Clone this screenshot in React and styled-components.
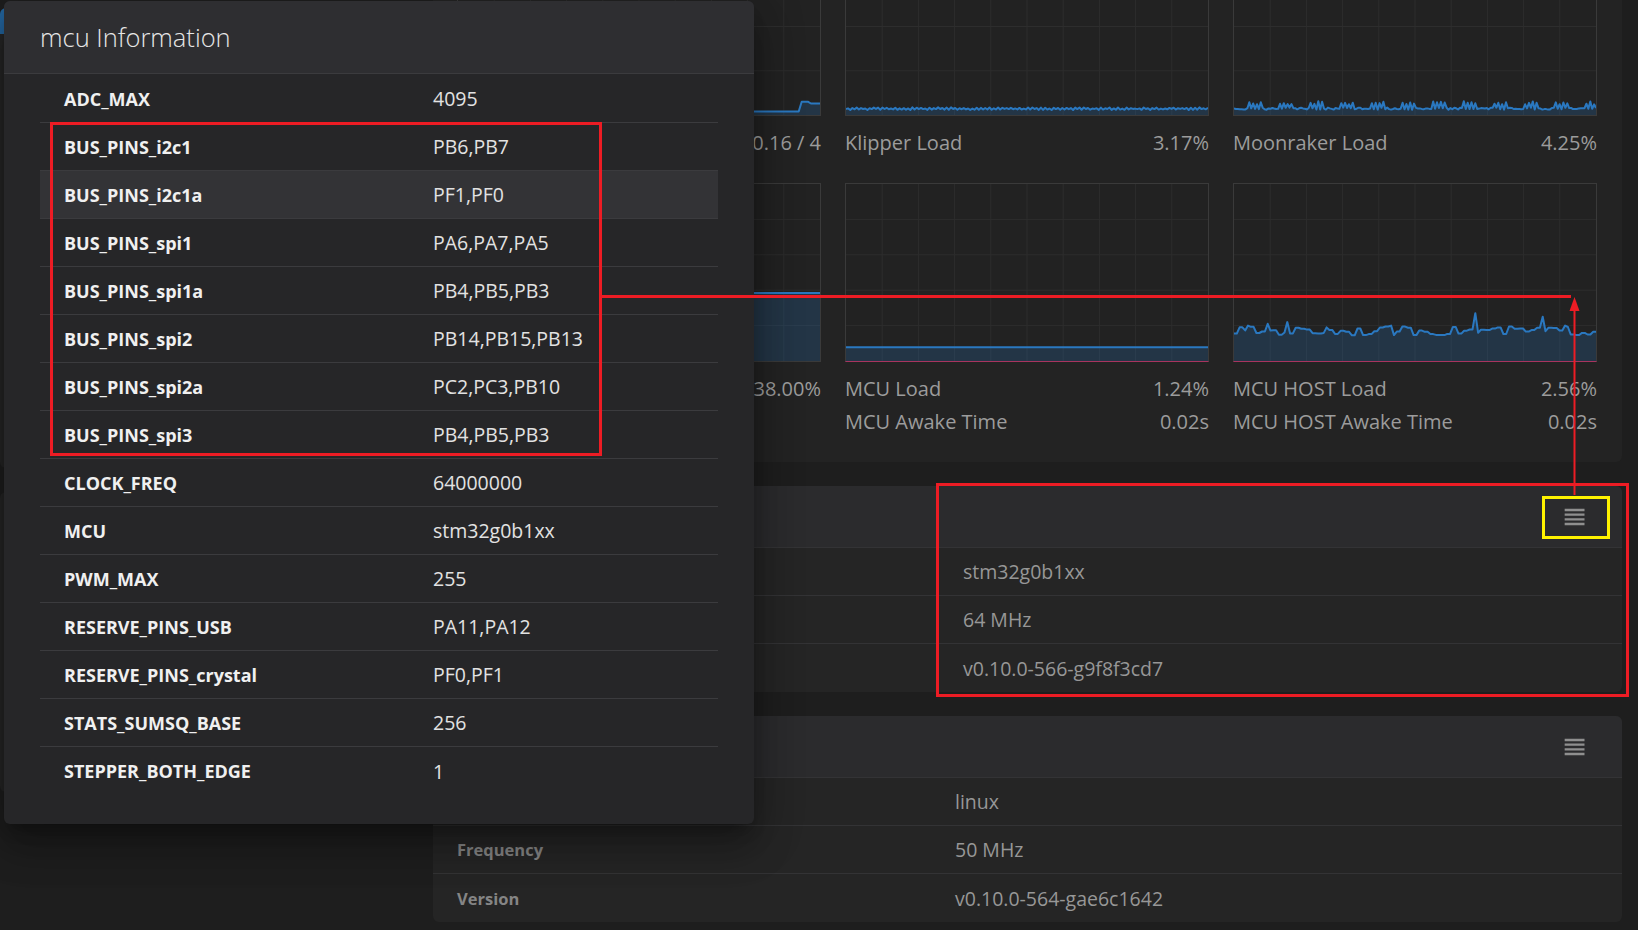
import React from "react";
import styled, { createGlobalStyle } from "styled-components";

const GlobalStyle = createGlobalStyle`
  html, body {
    margin: 0;
    padding: 0;
    background: #1e1e1e;
  }
  body {
    width: 1638px;
    height: 930px;
    overflow: hidden;
    font-family: "Open Sans", "Noto Sans", sans-serif;
  }
  * {
    box-sizing: border-box;
  }
`;

const Page = styled.div`
  position: relative;
  width: 1638px;
  height: 930px;
  overflow: hidden;
  display: grid;
  grid-template-columns: 409px 1189px;
  column-gap: 24px;
  align-items: start;
  background: #1e1e1e;
`;

const LeftColumn = styled.div`
  display: flex;
  flex-direction: column;
  gap: 24px;
  padding-top: 8px;
`;

const SideCard = styled.div`
  background: #262626;
  border-radius: 6px;
  height: ${(p) => p.$h}px;
  border-top: ${(p) => (p.$accent ? "26px solid #2466a0" : "none")};
`;

const RightColumn = styled.div`
  display: flex;
  flex-direction: column;
  gap: 24px;
  margin-top: -87px;
`;

const LoadCard = styled.div`
  background: #232323;
  border-radius: 6px;
  padding: 24px;
  display: grid;
  grid-template-columns: repeat(3, 364px);
  column-gap: 24px;
  row-gap: 24px;
`;

const ChartCell = styled.div`
  display: flex;
  flex-direction: column;
`;

const ChartBox = styled.div`
  height: 179px;
  border: 1px solid #3a3a3a;
  border-bottom-color: ${(p) => (p.$pink ? "#a8345e" : "#3a3a3a")};
  background: #222;
  svg {
    display: block;
    width: 100%;
    height: 100%;
  }
`;

const Stats = styled.div`
  margin-top: 10px;
  display: flex;
  flex-direction: column;
`;

const StatRow = styled.div`
  display: flex;
  justify-content: space-between;
  height: 33px;
  line-height: 33px;
  font-size: 20px;
  color: #9c9c9c;
`;

const InfoCard = styled.div`
  background: #252525;
  border-radius: 6px;
  overflow: hidden;
`;

const CardHeader = styled.div`
  height: 62px;
  display: flex;
  align-items: center;
  justify-content: flex-end;
  padding: 0 34px 0 24px;
  background: #2b2b2d;
  border-bottom: 1px solid #333335;
`;

const MenuButton = styled.svg`
  width: 28px;
  height: 28px;
  fill: #8f8f8f;
`;

const InfoRow = styled.div`
  display: grid;
  grid-template-columns: ${(p) => p.$labelCol}px 1fr;
  align-items: center;
  height: 48px;
  border-bottom: 1px solid #333335;
  &:last-child {
    border-bottom: none;
  }
`;

const InfoLabel = styled.div`
  padding-left: 24px;
  font-size: 16.5px;
  font-weight: 700;
  color: #858585;
`;

const InfoValue = styled.div`
  font-size: 19.5px;
  color: #979797;
`;

const Dialog = styled.div`
  position: absolute;
  left: 4px;
  top: 1px;
  width: 750px;
  z-index: 10;
  background: #262628;
  border-radius: 6px;
  overflow: hidden;
  box-shadow: 0 11px 15px -7px rgba(0, 0, 0, 0.3),
    0 24px 38px 3px rgba(0, 0, 0, 0.2), 0 9px 46px 8px rgba(0, 0, 0, 0.18);
`;

const DialogHeader = styled.div`
  height: 73px;
  display: flex;
  align-items: center;
  padding-left: 36px;
  background: #2e2e31;
  border-bottom: 1px solid #3b3b3e;
  color: #e6e6e6;
  font-size: 25.5px;
  font-weight: 300;
`;

const DialogBody = styled.div`
  padding: 1px 36px 29px;
`;

const ParamRow = styled.div`
  display: grid;
  grid-template-columns: 393px 1fr;
  align-items: center;
  height: 48px;
  background: ${(p) => (p.$hover ? "#333336" : "transparent")};
  border-bottom: 1px solid #3b3b3e;
  &:last-child {
    border-bottom: none;
  }
`;

const ParamKey = styled.div`
  padding-left: 24px;
  font-size: 18px;
  font-weight: 700;
  color: #f0f0f0;
`;

const ParamValue = styled.div`
  font-size: 19.5px;
  color: #e2e2e2;
`;

const Annotations = styled.svg`
  position: absolute;
  left: 0;
  top: 0;
  z-index: 20;
  pointer-events: none;
`;

function rng(seed) {
  let s = seed;
  return () => {
    s = (s * 9301 + 49297) % 233280;
    return s / 233280;
  };
}

const W = 362;
const H = 177;

function makeSeries(kind) {
  const r = rng(kind.length * 97 + 13);
  const out = [];
  if (kind === "load") {
    for (let i = 0; i < 120; i++) {
      if (i < 113) out.push(0.02);
      else if (i < 116) out.push(0.075);
      else out.push(0.065);
    }
  } else if (kind === "klipper") {
    for (let i = 0; i < 170; i++) out.push(0.028 + (i % 2 ? 0.008 : 0) + r() * 0.007);
  } else if (kind === "moonraker") {
    for (let i = 0; i < 190; i++) {
      const spike = i % 16 > 7 && i % 2 === 0;
      out.push(spike ? 0.06 + r() * 0.018 : 0.03 + r() * 0.012);
    }
  } else if (kind === "memory") {
    out.push(0.385, 0.385);
  } else if (kind === "mcu") {
    out.push(0.078, 0.078);
  } else if (kind === "host") {
    const spikes = { 5: 0.2, 12: 0.21, 19: 0.22, 33: 0.19, 56: 0.2, 86: 0.27, 110: 0.25, 118: 0.2 };
    let v = 0.16;
    for (let i = 0; i < 130; i++) {
      if (i % 2 === 0) v = 0.145 + r() * 0.05;
      out.push(spikes[i] || v);
    }
  }
  return out;
}

function Chart({ kind, rows, pink }) {
  const data = makeSeries(kind);
  const pts = data.map((v, i) => [(i / (data.length - 1)) * W, H - v * H]);
  const line = pts
    .map((p, i) => `${i ? "L" : "M"}${p[0].toFixed(1)},${p[1].toFixed(1)}`)
    .join(" ");
  const area = `${line} L${W},${H} L0,${H} Z`;
  const vLines = Array.from({ length: 9 }, (_, k) => ((k + 1) * W) / 10);
  const hLines = Array.from({ length: rows - 1 }, (_, k) => ((k + 1) * H) / rows);
  return (
    <ChartBox $pink={pink}>
      <svg viewBox={`0 0 ${W} ${H}`} preserveAspectRatio="none">
        {vLines.map((x) => (
          <line key={`v${x}`} x1={x} x2={x} y1="0" y2={H} stroke="#2d2d2d" strokeWidth="1" />
        ))}
        {hLines.map((y) => (
          <line key={`h${y}`} x1="0" x2={W} y1={y} y2={y} stroke="#2d2d2d" strokeWidth="1" />
        ))}
        <path d={area} fill="rgba(38,110,180,0.25)" />
        <path d={line} fill="none" stroke="#2a78c0" strokeWidth="2" strokeLinejoin="round" />
      </svg>
    </ChartBox>
  );
}

const MenuIcon = () => (
  <MenuButton viewBox="0 0 24 24">
    <path d="M4,5V7H21V5M4,11H21V9H4M4,15H21V13H4M4,19H21V17H4V19Z" />
  </MenuButton>
);

const params = [
  ["ADC_MAX", "4095"],
  ["BUS_PINS_i2c1", "PB6,PB7"],
  ["BUS_PINS_i2c1a", "PF1,PF0"],
  ["BUS_PINS_spi1", "PA6,PA7,PA5"],
  ["BUS_PINS_spi1a", "PB4,PB5,PB3"],
  ["BUS_PINS_spi2", "PB14,PB15,PB13"],
  ["BUS_PINS_spi2a", "PC2,PC3,PB10"],
  ["BUS_PINS_spi3", "PB4,PB5,PB3"],
  ["CLOCK_FREQ", "64000000"],
  ["MCU", "stm32g0b1xx"],
  ["PWM_MAX", "255"],
  ["RESERVE_PINS_USB", "PA11,PA12"],
  ["RESERVE_PINS_crystal", "PF0,PF1"],
  ["STATS_SUMSQ_BASE", "256"],
  ["STEPPER_BOTH_EDGE", "1"],
];

// labels of the first column sit under the dialog, only the values show
const charts = [
  { kind: "load", rows: 4, stats: [["", "0.16 / 4"]] },
  { kind: "klipper", rows: 4, stats: [["Klipper Load", "3.17%"]] },
  { kind: "moonraker", rows: 4, stats: [["Moonraker Load", "4.25%"]] },
  { kind: "memory", rows: 5, stats: [["", "38.00%"]] },
  {
    kind: "mcu",
    rows: 5,
    pink: true,
    stats: [
      ["MCU Load", "1.24%"],
      ["MCU Awake Time", "0.02s"],
    ],
  },
  {
    kind: "host",
    rows: 5,
    pink: true,
    stats: [
      ["MCU HOST Load", "2.56%"],
      ["MCU HOST Awake Time", "0.02s"],
    ],
  },
];

const mcuInfo = [
  ["", "stm32g0b1xx"],
  ["", "64 MHz"],
  ["", "v0.10.0-566-g9f8f3cd7"],
];

const hostInfo = [
  ["", "linux"],
  ["Frequency", "50 MHz"],
  ["Version", "v0.10.0-564-gae6c1642"],
];

function InfoPanel({ rows, labelCol }) {
  return (
    <InfoCard>
      <CardHeader>
        <MenuIcon />
      </CardHeader>
      {rows.map(([label, value]) => (
        <InfoRow key={value} $labelCol={labelCol}>
          <InfoLabel>{label}</InfoLabel>
          <InfoValue>{value}</InfoValue>
        </InfoRow>
      ))}
    </InfoCard>
  );
}

export default function App() {
  return (
    <>
      <GlobalStyle />
      <Page>
        <LeftColumn>
          <SideCard $h={460} $accent />
          <SideCard $h={300} />
        </LeftColumn>

        <RightColumn>
          <LoadCard>
            {charts.map((c) => (
              <ChartCell key={c.kind}>
                <Chart kind={c.kind} rows={c.rows} pink={c.pink} />
                <Stats>
                  {c.stats.map(([label, value]) => (
                    <StatRow key={value}>
                      <span>{label}</span>
                      <span>{value}</span>
                    </StatRow>
                  ))}
                </Stats>
              </ChartCell>
            ))}
          </LoadCard>
          <InfoPanel rows={mcuInfo} labelCol={530} />
          <InfoPanel rows={hostInfo} labelCol={522} />
        </RightColumn>

        <Dialog>
          <DialogHeader>mcu Information</DialogHeader>
          <DialogBody>
            {params.map(([key, value]) => (
              <ParamRow key={key} $hover={key === "BUS_PINS_i2c1a"}>
                <ParamKey>{key}</ParamKey>
                <ParamValue>{value}</ParamValue>
              </ParamRow>
            ))}
          </DialogBody>
        </Dialog>

        <Annotations width="1638" height="930" viewBox="0 0 1638 930">
          <rect x="51.5" y="123.5" width="549" height="331" fill="none" stroke="#ed1c24" strokeWidth="3" />
          <line x1="601" y1="296.5" x2="1571" y2="296.5" stroke="#ed1c24" strokeWidth="3" />
          <line x1="1574.5" y1="308" x2="1574.5" y2="495" stroke="#ed1c24" strokeWidth="2" />
          <polygon points="1574.5,297 1569.5,311 1579.5,311" fill="#ed1c24" />
          <rect x="937.5" y="484.5" width="690" height="211" fill="none" stroke="#ed1c24" strokeWidth="3" />
          <rect x="1543.5" y="497.5" width="65" height="40" fill="none" stroke="#fff200" strokeWidth="3" />
        </Annotations>
      </Page>
    </>
  );
}
